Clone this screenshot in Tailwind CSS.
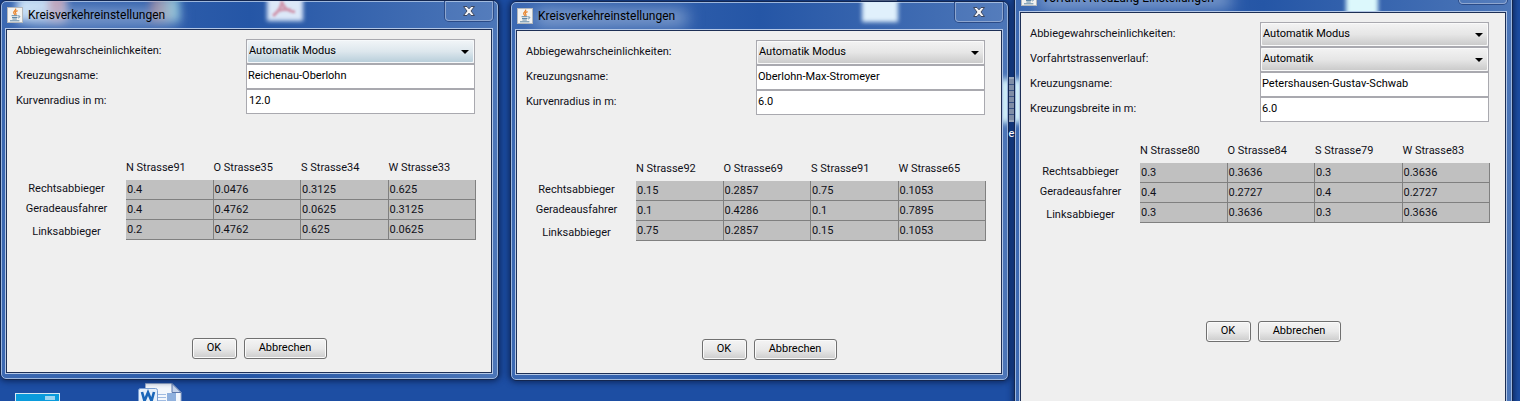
<!DOCTYPE html>
<html lang="de">
<head>
<meta charset="utf-8">
<title>Kreuzungseinstellungen</title>
<script src="https://cdn.jsdelivr.net/npm/@tailwindcss/browser@4"></script>
</head>
<body>
<main class="relative h-screen overflow-hidden bg-[#1d4ea3] font-['Roboto','Noto_Sans',sans-serif] text-[11px] text-[#101018]">

<svg class="hidden" aria-hidden="true">
  <symbol id="java" viewBox="0 0 16 16">
    <rect x=".5" y=".5" width="15" height="15" fill="#f2f2f0" stroke="#b4b8bc"/>
    <path d="M8.600 1.500c1.400 1.800-3.200 2.600-1.800 4.600.4.7.9 1.200 1 1.800M10.600 3.600c-2.600 1-2.600 1.800-1.800 2.800.5.7.3 1.200-.2 1.600" fill="none" stroke="#e8832a" stroke-width="1.200"/>
    <path d="M4.600 8.700h6M5 10.500h5.400M5.400 12h4.400M3 13.800h9.400M11 9c2.600-.7 2.200 1.500.2 2" fill="none" stroke="#5d86a6" stroke-width="1"/>
  </symbol>
  <symbol id="close" viewBox="0 0 14 12">
    <path d="M1.500 1.500H5L7 3.800 9 1.500h3.500L9 6l3.500 4.500H9L7 8.200 5 10.500H1.500L5 6Z" fill="#f4f4f6" stroke="#3d4862" stroke-width="1"/>
  </symbol>
  <symbol id="arrow" viewBox="0 0 8 4"><path d="M0 0h8L4 4Z" fill="#000"/></symbol>
</svg>

<!-- desktop icons -->
<div class="absolute left-[15px] top-[393px] h-6 w-[45px] border border-[#d4e8f4] bg-[#0a9bdc]">
  <div class="ml-auto mr-1 mt-0.5 h-1 w-2.5 bg-[#9bd5f1]"></div>
</div>
<svg class="absolute left-[137px] top-[383px]" width="46" height="30" viewBox="0 0 46 30" aria-hidden="true">
  <path d="M8.500.5H35l9 9V30H8.500Z" fill="#f3f7fc" stroke="#9cadcb"/>
  <path d="M35 .5v9h9Z" fill="#c5d3ea" stroke="#5d78ab"/>
  <path d="M20 11.500h9M20 14.500h9M20 17.500h9" stroke="#9fbbe2"/>
  <rect x="30" y="10" width="9" height="8" fill="#8fb0dd"/>
  <rect x="1.500" y="5.500" width="19" height="24" rx="2" fill="#e6f0fb" stroke="#7b9fd2"/>
  <path d="M5 9l2.500 9L11 9.500 14.500 18 17 9" fill="none" stroke="#1a66b8" stroke-width="2.600"/>
</svg>
<div class="absolute left-[861px] top-0 h-1 w-9 bg-[#9da4b4]"></div>

<!-- window 1 -->
<section aria-label="Kreisverkehreinstellungen" class="absolute left-0 top-0 w-[499px] overflow-hidden rounded-md border border-[#13264f] bg-linear-to-r from-[#3c69b2] via-[#2556a6] to-[#4c76b8] pb-[5px] pl-1 pr-[5px] shadow-[0_0_6px_1px_#0b2458]">
  <div class="pointer-events-none absolute inset-0 rounded-[5px] border border-[#9db7dd]"></div>
  <div class="absolute left-4 -top-1 h-6 w-12 bg-[#cfe6fa] blur-xs"></div>
  <div class="absolute left-12 -top-1 h-6 w-4 bg-[#c06f86]/60 blur-xs"></div>
  <div class="absolute left-6 top-2 h-4 w-38 bg-[#a9bfe0]/70 blur-sm"></div>
  <div class="absolute left-[150px] -top-1 h-6 w-7 bg-linear-to-r from-[#c98a90]/60 to-[#8fd0e4] blur-xs"></div>
  <div class="absolute left-[266px] -top-1 h-6 w-9 bg-[#dce8f8] blur-[2px]"></div>
  <svg class="absolute left-[270px] top-0 blur-[1px]" width="26" height="16" viewBox="0 0 26 16" aria-hidden="true"><path d="M11 0c0 6-3 10-9 15M11 2c3 6 6 8 13 9M7 10c4-2 8-2 13-1" fill="none" stroke="#cf97ae" stroke-width="3"/></svg>
  <header class="relative flex h-[27px] items-center gap-[5px] pl-0.5">
    <svg class="size-4" aria-hidden="true"><use href="#java"/></svg>
    <h1 class="grow text-[12px] text-black">Kreisverkehreinstellungen</h1>
    <button type="button" aria-label="Schließen" class="flex h-5 w-12 items-center justify-center self-start rounded-b border border-t-0 border-[#8ea6cf] bg-white/5 shadow-[0_0_0_1px_#2b4b87]"><svg class="h-3 w-3.5" aria-hidden="true"><use href="#close"/></svg></button>
  </header>
  <div class="relative border border-[#b3c7e6]"><form class="border border-[#1d2f55] bg-[#efefef] pb-[13px] pl-[9px] pr-4 pt-[9px]">
    <div class="grid min-h-[119px] auto-rows-[25px] grid-cols-[230px_1fr] items-stretch">
      <label for="a1" class="leading-6">Abbiegewahrscheinlichkeiten:</label>
      <div class="relative border border-[#a9a9af]"><select id="a1" class="block size-full appearance-none rounded-xs border border-[#f6f9fb] bg-linear-to-b from-[#f0f4f7] from-0% via-[#dde7ed] via-50% to-[#b9cfdb] pl-px text-black"><option>Automatik Modus</option></select><svg class="pointer-events-none absolute right-[5px] top-2.5 h-1 w-2" aria-hidden="true"><use href="#arrow"/></svg></div>
      <label for="n1" class="leading-6">Kreuzungsname:</label>
      <input id="n1" value="Reichenau-Oberlohn" class="min-w-0 border border-[#a9a9af] bg-white px-px text-black">
      <label for="r1" class="leading-6">Kurvenradius in m:</label>
      <input id="r1" value="12.0" class="min-w-0 border border-[#a9a9af] bg-white px-0.5 text-black">
    </div>
    <table class="-ml-[9px] w-[469px] table-fixed border-separate border-spacing-0 text-left">
      <colgroup><col class="w-[119px]"><col><col><col><col></colgroup>
      <thead><tr class="h-[22px] leading-5"><td></td><th class="pb-0.5 font-normal">N Strasse91</th><th class="pb-0.5 font-normal">O Strasse35</th><th class="pb-0.5 font-normal">S Strasse34</th><th class="pb-0.5 font-normal">W Strasse33</th></tr></thead>
      <tbody class="leading-[19px] [&_td]:border-b [&_td]:border-r [&_td]:border-[#808080] [&_td]:bg-[#c0c0c0] [&_td]:pl-px [&_th]:text-center [&_th]:font-normal [&_th]:leading-[17px]">
        <tr><th class="align-top">Rechtsabbieger</th><td>0.4</td><td>0.0476</td><td>0.3125</td><td>0.625</td></tr>
        <tr><th class="align-top">Geradeausfahrer</th><td>0.4</td><td>0.4762</td><td>0.0625</td><td>0.3125</td></tr>
        <tr><th class="align-bottom">Linksabbieger</th><td>0.2</td><td>0.4762</td><td>0.625</td><td>0.0625</td></tr>
      </tbody>
    </table>
    <div class="mt-[98px] flex justify-center gap-[7px] pl-[27px]">
      <button type="button" class="h-[21px] w-[45px] rounded-[3px] border border-[#707070] bg-linear-to-b from-[#f4f4f4] via-[#e9e9e9] to-[#cccccc] text-black shadow-[inset_0_0_0_1px_#fafafa]">OK</button>
      <button type="button" class="h-[21px] w-[83px] rounded-[3px] border border-[#707070] bg-linear-to-b from-[#f4f4f4] via-[#e9e9e9] to-[#cccccc] text-black shadow-[inset_0_0_0_1px_#fafafa]">Abbrechen</button>
    </div>
  </form></div>
</section>

<!-- window 2 -->
<section aria-label="Kreisverkehreinstellungen" class="absolute left-[510px] top-px w-[499px] overflow-hidden rounded-md border border-[#13264f] bg-linear-to-r from-[#3c69b2] via-[#2556a6] to-[#4c76b8] pb-[5px] pl-1 pr-[5px] shadow-[0_0_6px_1px_#0b2458]">
  <div class="absolute -right-1 top-[77px] h-11 w-3 bg-[#d6f4fb] blur-[3px]"></div>
  <div class="pointer-events-none absolute inset-0 rounded-[5px] border border-[#9db7dd]"></div>
  <div class="absolute left-6 top-2 h-4 w-38 bg-[#a9bfe0]/70 blur-sm"></div>
  <div class="absolute left-[351px] -top-1 h-6 w-9 bg-[#e0f0fc] blur-[2px]"></div>
  <header class="relative flex h-[27px] items-center gap-[5px] pl-0.5">
    <svg class="size-4" aria-hidden="true"><use href="#java"/></svg>
    <h1 class="grow text-[12px] text-black">Kreisverkehreinstellungen</h1>
    <button type="button" aria-label="Schließen" class="flex h-5 w-12 items-center justify-center self-start rounded-b border border-t-0 border-[#8ea6cf] bg-white/5 shadow-[0_0_0_1px_#2b4b87]"><svg class="h-3 w-3.5" aria-hidden="true"><use href="#close"/></svg></button>
  </header>
  <div class="relative border border-[#b3c7e6]"><form class="border border-[#1d2f55] bg-[#efefef] pb-[13px] pl-[9px] pr-4 pt-[9px]">
    <div class="grid min-h-[119px] auto-rows-[25px] grid-cols-[230px_1fr] items-stretch">
      <label for="a2" class="leading-6">Abbiegewahrscheinlichkeiten:</label>
      <div class="relative border border-[#a9a9af]"><select id="a2" class="block size-full appearance-none rounded-xs border border-[#fafafa] bg-linear-to-b from-[#f2f2f2] from-0% via-[#e6e6e6] via-50% to-[#cbcbcb] pl-px text-black"><option>Automatik Modus</option></select><svg class="pointer-events-none absolute right-[5px] top-2.5 h-1 w-2" aria-hidden="true"><use href="#arrow"/></svg></div>
      <label for="n2" class="leading-6">Kreuzungsname:</label>
      <input id="n2" value="Oberlohn-Max-Stromeyer" class="min-w-0 border border-[#a9a9af] bg-white px-px text-black">
      <label for="r2" class="leading-6">Kurvenradius in m:</label>
      <input id="r2" value="6.0" class="min-w-0 border border-[#a9a9af] bg-white px-px text-black">
    </div>
    <table class="-ml-[9px] w-[469px] table-fixed border-separate border-spacing-0 text-left">
      <colgroup><col class="w-[119px]"><col><col><col><col></colgroup>
      <thead><tr class="h-[22px] leading-5"><td></td><th class="pb-0.5 font-normal">N Strasse92</th><th class="pb-0.5 font-normal">O Strasse69</th><th class="pb-0.5 font-normal">S Strasse91</th><th class="pb-0.5 font-normal">W Strasse65</th></tr></thead>
      <tbody class="leading-[19px] [&_td]:border-b [&_td]:border-r [&_td]:border-[#808080] [&_td]:bg-[#c0c0c0] [&_td]:pl-px [&_th]:text-center [&_th]:font-normal [&_th]:leading-[17px]">
        <tr><th class="align-top">Rechtsabbieger</th><td>0.15</td><td>0.2857</td><td>0.75</td><td>0.1053</td></tr>
        <tr><th class="align-top">Geradeausfahrer</th><td>0.1</td><td>0.4286</td><td>0.1</td><td>0.7895</td></tr>
        <tr><th class="align-bottom">Linksabbieger</th><td>0.75</td><td>0.2857</td><td>0.15</td><td>0.1053</td></tr>
      </tbody>
    </table>
    <div class="mt-[98px] flex justify-center gap-[7px] pl-[27px]">
      <button type="button" class="h-[21px] w-[45px] rounded-[3px] border border-[#707070] bg-linear-to-b from-[#f4f4f4] via-[#e9e9e9] to-[#cccccc] text-black shadow-[inset_0_0_0_1px_#fafafa]">OK</button>
      <button type="button" class="h-[21px] w-[83px] rounded-[3px] border border-[#707070] bg-linear-to-b from-[#f4f4f4] via-[#e9e9e9] to-[#cccccc] text-black shadow-[inset_0_0_0_1px_#fafafa]">Abbrechen</button>
    </div>
  </form></div>
</section>

<!-- window 3 -->
<section aria-label="Vorfahrt Kreuzung Einstellungen" class="absolute left-[1014px] -top-[17px] w-[499px] overflow-hidden rounded-md border border-[#13264f] bg-linear-to-r from-[#3c69b2] via-[#2556a6] to-[#4c76b8] pb-[5px] pl-1 pr-[5px] shadow-[0_0_6px_1px_#0b2458]">
  <div class="absolute -left-1 top-[95px] h-11 w-3 bg-[#d6f4fb] blur-[3px]"></div>
  <div class="pointer-events-none absolute inset-0 rounded-[5px] border border-[#9db7dd]"></div>
  <div class="absolute left-6 top-2 h-4 w-48 bg-[#a9bfe0]/70 blur-sm"></div>
  <div class="absolute left-[331px] top-1 h-8 w-8 bg-[#dcf8fc] blur-[2px]"></div>
  <header class="relative flex h-[27px] items-center gap-[5px] pl-0.5">
    <svg class="size-4" aria-hidden="true"><use href="#java"/></svg>
    <h1 class="grow text-[12px] text-black">Vorfahrt Kreuzung Einstellungen</h1>
    <button type="button" aria-label="Schließen" class="flex h-5 w-12 items-center justify-center self-start rounded-b border border-t-0 border-[#8ea6cf] bg-white/5 shadow-[0_0_0_1px_#2b4b87]"><svg class="h-3 w-3.5" aria-hidden="true"><use href="#close"/></svg></button>
  </header>
  <div class="relative border border-[#b3c7e6]"><form class="border border-[#1d2f55] bg-[#efefef] pb-20 pl-[9px] pr-4 pt-[9px]">
    <div class="grid min-h-[119px] auto-rows-[25px] grid-cols-[230px_1fr] items-stretch">
      <label for="a3" class="leading-6">Abbiegewahrscheinlichkeiten:</label>
      <div class="relative border border-[#a9a9af]"><select id="a3" class="block size-full appearance-none rounded-xs border border-[#fafafa] bg-linear-to-b from-[#f2f2f2] from-0% via-[#e6e6e6] via-50% to-[#cbcbcb] pl-px text-black"><option>Automatik Modus</option></select><svg class="pointer-events-none absolute right-[5px] top-2.5 h-1 w-2" aria-hidden="true"><use href="#arrow"/></svg></div>
      <label for="v3" class="leading-6">Vorfahrtstrassenverlauf:</label>
      <div class="relative border border-[#a9a9af]"><select id="v3" class="block size-full appearance-none rounded-xs border border-[#fafafa] bg-linear-to-b from-[#f2f2f2] from-0% via-[#e6e6e6] via-50% to-[#cbcbcb] pl-px text-black"><option>Automatik</option></select><svg class="pointer-events-none absolute right-[5px] top-2.5 h-1 w-2" aria-hidden="true"><use href="#arrow"/></svg></div>
      <label for="n3" class="leading-6">Kreuzungsname:</label>
      <input id="n3" value="Petershausen-Gustav-Schwab" class="min-w-0 border border-[#a9a9af] bg-white px-px text-black">
      <label for="b3" class="leading-6">Kreuzungsbreite in m:</label>
      <input id="b3" value="6.0" class="min-w-0 border border-[#a9a9af] bg-white px-px text-black">
    </div>
    <table class="-ml-[9px] w-[469px] table-fixed border-separate border-spacing-0 text-left">
      <colgroup><col class="w-[119px]"><col><col><col><col></colgroup>
      <thead><tr class="h-[22px] leading-5"><td></td><th class="pb-0.5 font-normal">N Strasse80</th><th class="pb-0.5 font-normal">O Strasse84</th><th class="pb-0.5 font-normal">S Strasse79</th><th class="pb-0.5 font-normal">W Strasse83</th></tr></thead>
      <tbody class="leading-[19px] [&_td]:border-b [&_td]:border-r [&_td]:border-[#808080] [&_td]:bg-[#c0c0c0] [&_td]:pl-px [&_th]:text-center [&_th]:font-normal [&_th]:leading-[17px]">
        <tr><th class="align-top">Rechtsabbieger</th><td>0.3</td><td>0.3636</td><td>0.3</td><td>0.3636</td></tr>
        <tr><th class="align-top">Geradeausfahrer</th><td>0.4</td><td>0.2727</td><td>0.4</td><td>0.2727</td></tr>
        <tr><th class="align-bottom">Linksabbieger</th><td>0.3</td><td>0.3636</td><td>0.3</td><td>0.3636</td></tr>
      </tbody>
    </table>
    <div class="mt-[98px] flex justify-center gap-[7px] pl-[27px]">
      <button type="button" class="h-[21px] w-[45px] rounded-[3px] border border-[#707070] bg-linear-to-b from-[#f4f4f4] via-[#e9e9e9] to-[#cccccc] text-black shadow-[inset_0_0_0_1px_#fafafa]">OK</button>
      <button type="button" class="h-[21px] w-[83px] rounded-[3px] border border-[#707070] bg-linear-to-b from-[#f4f4f4] via-[#e9e9e9] to-[#cccccc] text-black shadow-[inset_0_0_0_1px_#fafafa]">Abbrechen</button>
    </div>
  </form></div>
</section>

<!-- desktop icon showing between windows 2 and 3 -->
<div class="absolute left-[1009px] top-[77px] flex w-[5px] flex-col items-center text-white">
  <div class="h-[45px] w-full border-y-2 border-[#9aa6b9] bg-[repeating-linear-gradient(#7f8da6_0_5px,#3a5485_5px_6px)]"></div>
  <span class="mt-1 leading-4">e</span>
</div>
</main>
</body>
</html>
